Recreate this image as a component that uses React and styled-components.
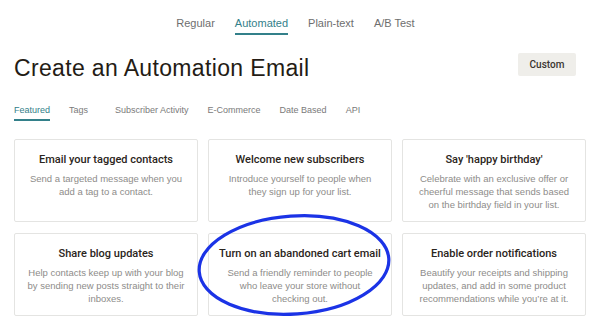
import styled, { createGlobalStyle } from 'styled-components';

const GlobalStyle = createGlobalStyle`
  body {
    margin: 0;
    background: #fff;
    font-family: 'Liberation Sans', Arial, sans-serif;
    color: #241c15;
  }
`;

const Page = styled.div`
  position: relative;
  width: 600px;
  height: 326px;
  overflow: hidden;
`;

const TopNav = styled.nav`
  display: flex;
  justify-content: center;
  gap: 20px;
  padding-right: 9px;
`;

const TopTab = styled.div`
  padding: 16px 0 3px;
  font-size: 11px;
  line-height: 14px;
  color: ${({ $active }) => ($active ? '#33808a' : '#6e6e6e')};
  border-bottom: 2px solid ${({ $active }) => ($active ? '#33808a' : 'transparent')};
`;

const Header = styled.div`
  display: flex;
  justify-content: space-between;
  align-items: flex-start;
  margin-top: 18px;
  padding: 0 24px 0 14px;
`;

const Title = styled.h1`
  margin: 2px 0 0;
  font-size: 23px;
  line-height: 26px;
  letter-spacing: 0.35px;
  font-weight: 400;
  color: #241c15;
`;

const CustomButton = styled.button`
  width: 58px;
  height: 23px;
  border: none;
  border-radius: 2px;
  background: #efeeea;
  font-family: Roboto, sans-serif;
  font-weight: 500;
  font-size: 10px;
  color: #3a3530;
  padding: 0;
`;

const SubNav = styled.div`
  display: flex;
  gap: 19px;
  margin-top: 23px;
  padding-left: 14px;
`;

const SubTab = styled.div`
  padding: 0 0 3px;
  margin-right: ${({ $extra }) => $extra || 0}px;
  font-size: 9px;
  line-height: 12px;
  color: ${({ $active }) => ($active ? '#33808a' : '#7a7a7a')};
  border-bottom: 2px solid ${({ $active }) => ($active ? '#33808a' : 'transparent')};
`;

const Grid = styled.div`
  display: grid;
  grid-template-columns: repeat(3, 184px);
  grid-auto-rows: 83px;
  column-gap: 10px;
  row-gap: 11px;
  margin-top: 18px;
  padding-left: 14px;
`;

const Card = styled.div`
  box-sizing: border-box;
  border: 1px solid #e4e4e2;
  border-radius: 2px;
  padding: 13px 4px 0;
  text-align: center;
`;

const CardTitle = styled.div`
  font-family: Roboto, 'Liberation Sans', sans-serif;
  font-size: 11px;
  line-height: 14px;
  font-weight: 500;
  white-space: nowrap;
  color: #2b2520;
`;

const CardText = styled.div`
  margin-top: 5px;
  font-size: 9.5px;
  line-height: 13px;
  color: #8e8c8a;
`;

const Circle = styled.svg`
  position: absolute;
  left: 195px;
  top: 212px;
  width: 200px;
  height: 106px;
  pointer-events: none;
`;

const cards = [
  ['Email your tagged contacts', ['Send a targeted message when you', 'add a tag to a contact.']],
  ['Welcome new subscribers', ['Introduce yourself to people when', 'they sign up for your list.']],
  ["Say 'happy birthday'", ['Celebrate with an exclusive offer or', 'cheerful message that sends based', 'on the birthday field in your list.']],
  ['Share blog updates', ['Help contacts keep up with your blog', 'by sending new posts straight to their', 'inboxes.']],
  ['Turn on an abandoned cart email', ['Send a friendly reminder to people', 'who leave your store without', 'checking out.']],
  ['Enable order notifications', ['Beautify your receipts and shipping', 'updates, and add in some product', 'recommendations while you\u2019re at it.']],
];

export default function App() {
  return (
    <Page>
      <GlobalStyle />
      <TopNav>
        <TopTab>Regular</TopTab>
        <TopTab $active>Automated</TopTab>
        <TopTab>Plain-text</TopTab>
        <TopTab>A/B Test</TopTab>
      </TopNav>
      <Header>
        <Title>Create an Automation Email</Title>
        <CustomButton>Custom</CustomButton>
      </Header>
      <SubNav>
        <SubTab $active>Featured</SubTab>
        <SubTab $extra={8}>Tags</SubTab>
        <SubTab>Subscriber Activity</SubTab>
        <SubTab>E-Commerce</SubTab>
        <SubTab>Date Based</SubTab>
        <SubTab>API</SubTab>
      </SubNav>
      <Grid>
        {cards.map(([title, lines]) => (
          <Card key={title}>
            <CardTitle>{title}</CardTitle>
            <CardText>
              {lines.map((line) => (
                <div key={line}>{line}</div>
              ))}
            </CardText>
          </Card>
        ))}
      </Grid>
      <Circle viewBox="0 0 200 106">
        <ellipse cx="99" cy="53" rx="95" ry="49" fill="none" stroke="#1b33e6" strokeWidth="3.2" transform="rotate(-4 99 53)" />
      </Circle>
    </Page>
  );
}
